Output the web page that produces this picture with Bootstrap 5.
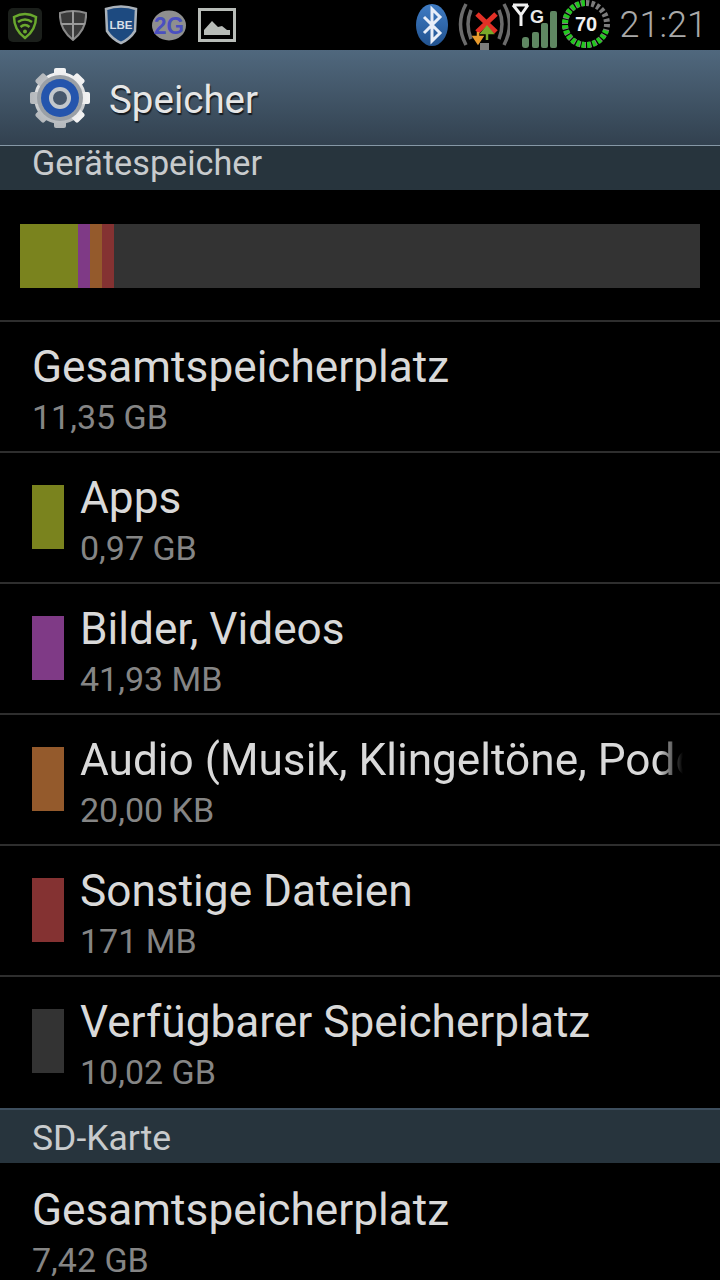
<!DOCTYPE html>
<html lang="de">
<head>
    <meta charset="UTF-8">
    <meta name="viewport" content="width=device-width, initial-scale=1.0">
    <title>Speicher</title>
    <link href="https://cdn.jsdelivr.net/npm/bootstrap@5.3.0/dist/css/bootstrap.min.css" rel="stylesheet">
    <style>
        html, body { background: #000; }
        body { width: 720px; height: 1280px; overflow: hidden; font-family: Roboto, "Liberation Sans", sans-serif; }
        svg { display: block; flex: none; }
        svg text { font-family: "Liberation Sans", sans-serif; font-weight: 700; }

        .status-bar { height: 50px; background: #000; padding-left: 8px; padding-right: 13px; }
        .status-time { font-size: 36px; line-height: 50px; color: #a9a9a9; margin-left: 9px; font-weight: 300; }
        .gap-17 { margin-left: 17px; }
        .gap-14 { margin-left: 14px; }
        .gap-12 { margin-left: 12px; }
        .gap-10 { margin-left: 10px; }
        .gap-1px { margin-left: 1px; }

        .action-bar { height: 95px; background: linear-gradient(#50687e, #32414f); padding-left: 29px; }
        .action-title { font-size: 38.500px; color: #e6e6e6; margin-left: 18px; padding-top: 5px; text-shadow: 1px 2px 1px #14191f; }

        .section-head { background: #27343d; color: #c8cbcd; padding-left: 32px; }
        .head-first { height: 45px; font-size: 34.200px; line-height: 34px; border-top: 1px solid #8698a6; }
        .head-sd { height: 55px; font-size: 35.500px; line-height: 56px; border-top: 2px solid #3d4e5d; }

        .usage-wrap { height: 130px; padding: 34px 20px 32px; }
        .usage-bar { height: 64px; border-radius: 0; background: #333; }
        .seg-apps { background: #7a831e; }
        .seg-media { background: #7f3a86; }
        .seg-audio { background: #945a2c; }
        .seg-misc { background: #843232; }
        .seg-free { background: #333; }

        .store-list { --bs-list-group-bg: #000; border-radius: 0; }
        .store-list .store-row { height: 131px; padding: 20px 0 9px 32px; background: #000; border-style: solid; border-color: #2e2e2e; border-width: 2px 0 0; }
        .store-list .tall-row { height: 133px; }
        .store-list .no-line { border-top-width: 0; height: 129px; padding-top: 22px; }
        .swatch { width: 32px; height: 64px; flex: none; margin-right: 16px; margin-top: 12px; }
        .row-title { font-size: 44.200px; line-height: 50px; color: #d9d9d9; white-space: nowrap; }
        .row-sub { font-size: 34px; line-height: 50px; color: #858585; white-space: nowrap; }
        .row-text { width: 603px; overflow: hidden; }
        .fade-end { -webkit-mask-image: linear-gradient(90deg, #000 578px, transparent 603px); mask-image: linear-gradient(90deg, #000 578px, transparent 603px); }
    </style>
</head>
<body>
    <!-- Statusleiste -->
    <div class="status-bar d-flex align-items-center">
        <svg width="34" height="34" viewBox="0 0 34 34">
            <rect width="34" height="34" rx="5" fill="#1b1f1b"/>
            <path d="M6 9 Q17 3 28 9 Q28 22 17 30 Q6 22 6 9Z" fill="none" stroke="#6aa82e" stroke-width="2.500"/>
            <path d="M10 14 Q17 9 24 14M12.500 19 Q17 15 21.500 19" fill="none" stroke="#6aa82e" stroke-width="2.500"/>
            <circle cx="17" cy="23.500" r="2" fill="#6aa82e"/>
        </svg>
        <svg class="gap-17" width="28" height="32" viewBox="0 0 28 32">
            <path d="M1 4 Q14 0 27 4 Q28 20 14 31 Q0 20 1 4Z" fill="#3a3a3a" stroke="#8a8a8a" stroke-width="2"/>
            <path d="M14 2V30M2 15H26" stroke="#9a9a9a" stroke-width="2"/>
        </svg>
        <svg class="gap-17" width="34" height="40" viewBox="0 0 34 40">
            <path d="M2 4 Q17 -1 32 4 L31 26 Q26 34 17 38 Q8 34 3 26Z" fill="#1d4a80" stroke="#aab2ba" stroke-width="2.500"/>
            <text x="17" y="24" font-size="11.500" fill="#d8dfe6" text-anchor="middle">LBE</text>
        </svg>
        <svg class="gap-14" width="34" height="31" viewBox="0 0 34 31">
            <ellipse cx="17" cy="15.500" rx="17" ry="15" fill="#8f8f8f"/>
            <text x="17" y="24" font-size="24" fill="#4a4fc0" text-anchor="middle" textLength="30" lengthAdjust="spacingAndGlyphs">2G</text>
        </svg>
        <svg class="gap-12" width="38" height="34" viewBox="0 0 38 34">
            <rect x="1.500" y="1.500" width="35" height="31" fill="#000" stroke="#b8bcb8" stroke-width="3"/>
            <path d="M6 27 V22 L14 13 L20 19 L24 18 L29 22 L32 22 V27Z" fill="#b8bcb8"/>
        </svg>

        <svg class="ms-auto" width="32" height="42" viewBox="0 0 32 42">
            <defs>
                <linearGradient id="bt" x1="0" y1="0" x2="0" y2="1">
                    <stop offset="0" stop-color="#3f7cc4"/>
                    <stop offset="1" stop-color="#21528f"/>
                </linearGradient>
            </defs>
            <ellipse cx="16" cy="21" rx="16" ry="21" fill="url(#bt)"/>
            <path d="M8 13 L24 29 L16 37 V5 L24 13 L8 29" fill="none" stroke="#e8eef8" stroke-width="3"/>
        </svg>
        <svg class="gap-10" width="52" height="50" viewBox="0 0 52 50">
            <path d="M8 4 Q-3 24 8 45M46 4 Q57 24 46 45" fill="none" stroke="#6b6b6b" stroke-width="3.500"/>
            <path d="M13 10 Q7 24 13 39M41 10 Q47 24 41 39" fill="none" stroke="#6b6b6b" stroke-width="3.500"/>
            <rect x="22" y="43" width="9" height="7" fill="#7c7c7c"/>
            <path d="M19 14 L38 32M38 14 L19 32" stroke="#e33026" stroke-width="5"/>
            <path d="M20 32 V37 M16 37 H24 L20 43Z" stroke="#e89a2c" stroke-width="2.500" fill="#e89a2c"/>
            <path d="M29 40 V33 M24 33 H34 L29 27Z" stroke="#79a82a" stroke-width="2.500" fill="#79a82a"/>
        </svg>
        <svg class="gap-1px" width="46" height="48" viewBox="0 0 46 48">
            <path d="M2 4 L10 14 V25 M17 4 L10 14 M2 4 H17" fill="none" stroke="#f2f2f2" stroke-width="3"/>
            <text x="19" y="22" font-size="18" fill="#e8e8e8">G</text>
            <rect x="11" y="36" width="7" height="11" rx="3" fill="#5f8762"/>
            <rect x="21" y="31" width="7" height="16" rx="2" fill="#5f8762"/>
            <rect x="30" y="22" width="7" height="25" rx="2" fill="#5f8762"/>
            <rect x="39" y="10" width="7" height="37" rx="2" fill="#5f8762"/>
        </svg>
        <svg class="ms-1" width="50" height="50" viewBox="0 0 50 50">
            <circle cx="25" cy="24" r="21" fill="none" stroke="#7c7c7c" stroke-width="6" pathLength="120" stroke-dasharray="3 2" transform="rotate(-90 25 24)"/>
            <circle cx="25" cy="24" r="21" fill="none" stroke="#22c81e" stroke-width="6" pathLength="120" stroke-dasharray="3 2 3 2 3 2 3 2 3 2 3 2 3 2 3 2 3 2 3 2 3 2 3 2 3 2 3 2 3 2 3 2 3 37" transform="rotate(18 25 24)"/>
            <text x="25" y="31" font-size="20" fill="#f0f0f0" text-anchor="middle">70</text>
        </svg>
        <span class="status-time">21:21</span>
    </div>

    <!-- Titelleiste -->
    <div class="action-bar d-flex align-items-center">
        <svg width="62" height="62" viewBox="0 0 62 62">
            <defs>
                <linearGradient id="silber" x1="0" y1="0" x2="0" y2="1">
                    <stop offset="0" stop-color="#f4f4f4"/>
                    <stop offset="1" stop-color="#b4b8bc"/>
                </linearGradient>
            </defs>
            <g fill="url(#silber)">
                <circle cx="31" cy="31" r="26"/>
                <rect x="25" y="1" width="12" height="60" rx="2"/>
                <rect x="25" y="1" width="12" height="60" rx="2" transform="rotate(45 31 31)"/>
                <rect x="25" y="1" width="12" height="60" rx="2" transform="rotate(90 31 31)"/>
                <rect x="25" y="1" width="12" height="60" rx="2" transform="rotate(135 31 31)"/>
            </g>
            <circle cx="31" cy="31" r="23" fill="#9aa0a6"/>
            <circle cx="31" cy="31" r="19" fill="#2455ad"/>
            <circle cx="31" cy="31" r="11" fill="#c3c8cc"/>
            <circle cx="31" cy="31" r="7" fill="#47586c"/>
        </svg>
        <span class="action-title">Speicher</span>
    </div>

    <div class="section-head head-first">Gerätespeicher</div>

    <div class="usage-wrap">
        <div class="usage-bar d-flex overflow-hidden">
            <div class="seg-apps" style="width: 58px"></div>
            <div class="seg-media" style="width: 12px"></div>
            <div class="seg-audio" style="width: 12px"></div>
            <div class="seg-misc" style="width: 12px"></div>
            <div class="seg-free flex-grow-1"></div>
        </div>
    </div>

    <div class="list-group list-group-flush store-list">
        <div class="list-group-item store-row">
            <div class="row-title">Gesamtspeicherplatz</div>
            <div class="row-sub">11,35 GB</div>
        </div>
        <div class="list-group-item store-row d-flex">
            <div class="swatch seg-apps"></div>
            <div class="row-text">
                <div class="row-title">Apps</div>
                <div class="row-sub">0,97 GB</div>
            </div>
        </div>
        <div class="list-group-item store-row d-flex">
            <div class="swatch seg-media"></div>
            <div class="row-text">
                <div class="row-title">Bilder, Videos</div>
                <div class="row-sub">41,93 MB</div>
            </div>
        </div>
        <div class="list-group-item store-row d-flex">
            <div class="swatch seg-audio"></div>
            <div class="row-text">
                <div class="row-title fade-end">Audio (Musik, Klingeltöne, Podcasts usw.)</div>
                <div class="row-sub">20,00 KB</div>
            </div>
        </div>
        <div class="list-group-item store-row d-flex">
            <div class="swatch seg-misc"></div>
            <div class="row-text">
                <div class="row-title">Sonstige Dateien</div>
                <div class="row-sub">171 MB</div>
            </div>
        </div>
        <div class="list-group-item store-row tall-row d-flex">
            <div class="swatch seg-free"></div>
            <div class="row-text">
                <div class="row-title">Verfügbarer Speicherplatz</div>
                <div class="row-sub">10,02 GB</div>
            </div>
        </div>
    </div>

    <div class="section-head head-sd">SD-Karte</div>

    <div class="list-group list-group-flush store-list">
        <div class="list-group-item store-row no-line">
            <div class="row-title">Gesamtspeicherplatz</div>
            <div class="row-sub">7,42 GB</div>
        </div>
    </div>

    <script src="https://cdn.jsdelivr.net/npm/bootstrap@5.3.0/dist/js/bootstrap.bundle.min.js"></script>
</body>
</html>
